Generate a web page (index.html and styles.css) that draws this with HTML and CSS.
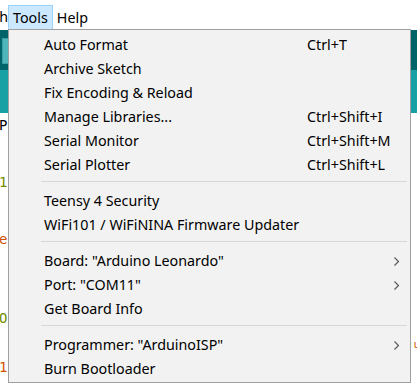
FILE: index.html
```html
<!DOCTYPE html>
<html lang="en">
<head>
  <meta charset="UTF-8">
  <title>Tools menu</title>
  <link rel="stylesheet" href="styles.css">
</head>
<body>
  <div class="window">
    <div class="menubar">
      <span class="menubar-item cut"><span>Sketch</span></span>
      <span class="menubar-item open">Tools</span>
      <span class="menubar-item">Help</span>
    </div>
    <div class="toolbar">
      <div class="tool-btn"></div>
    </div>
    <div class="tabs"></div>
    <div class="editor">
      <div class="code-line plain">P</div>
      <div class="code-line">&nbsp;</div>
      <div class="code-line">&nbsp;</div>
      <div class="code-line olive">1]</div>
      <div class="code-line">&nbsp;</div>
      <div class="code-line">&nbsp;</div>
      <div class="code-line orange">e</div>
      <div class="code-line">&nbsp;</div>
      <div class="code-line">&nbsp;</div>
      <div class="code-line">&nbsp;</div>
      <div class="code-line tall olive">O</div>
      <div class="code-line short"><span class="edge-blue">:</span><span class="edge-orange">u</span></div>
      <div class="code-line orange">1</div>
    </div>

    <div class="menu">
      <div class="item"><span>Auto Format</span><span>Ctrl+T</span></div>
      <div class="item"><span>Archive Sketch</span></div>
      <div class="item"><span>Fix Encoding &amp; Reload</span></div>
      <div class="item"><span>Manage Libraries...</span><span>Ctrl+Shift+I</span></div>
      <div class="item"><span>Serial Monitor</span><span>Ctrl+Shift+M</span></div>
      <div class="item"><span>Serial Plotter</span><span>Ctrl+Shift+L</span></div>
      <div class="sep"></div>
      <div class="item"><span>Teensy 4 Security</span></div>
      <div class="item"><span>WiFi101 / WiFiNINA Firmware Updater</span></div>
      <div class="sep"></div>
      <div class="item sub"><span>Board: "Arduino Leonardo"</span><span></span>
        <svg class="chev" width="6" height="9" viewBox="0 0 6 9"><polyline points="0.5,0.5 4.5,4.5 0.5,8.5" fill="none" stroke="#555" stroke-width="1.1"/></svg>
      </div>
      <div class="item sub"><span>Port: "COM11"</span><span></span>
        <svg class="chev" width="6" height="9" viewBox="0 0 6 9"><polyline points="0.5,0.5 4.5,4.5 0.5,8.5" fill="none" stroke="#555" stroke-width="1.1"/></svg>
      </div>
      <div class="item"><span>Get Board Info</span></div>
      <div class="sep"></div>
      <div class="item sub"><span>Programmer: "ArduinoISP"</span><span></span>
        <svg class="chev" width="6" height="9" viewBox="0 0 6 9"><polyline points="0.5,0.5 4.5,4.5 0.5,8.5" fill="none" stroke="#555" stroke-width="1.1"/></svg>
      </div>
      <div class="item"><span>Burn Bootloader</span></div>
    </div>
  </div>
</body>
</html>
```

FILE: styles.css
```css
body {
  margin: 0;
  background: #fff;
  font-family: 'Noto Sans', sans-serif;
  font-size: 14.3px;
  color: #000;
}
.window {
  position: relative;
  width: 417px;
  height: 389px;
  overflow: hidden;
}
.menubar {
  display: flex;
  align-items: flex-start;
  height: 30px;
  background: #fff;
}
.menubar-item {
  margin-top: 5px;
  height: 25px;
  line-height: 24px;
  padding: 0 4px 0 3px;
  border: 1px solid transparent;
  box-sizing: border-box;
  white-space: nowrap;
}
.menubar-item.cut {
  display: flex;
  justify-content: flex-end;
  width: 8px;
  padding: 0;
  border: 0;
  overflow: hidden;
}
.menubar-item.open {
  padding: 0 4px 0 4px;
  background: #cce8ff;
  border-color: #99d1ff;
}
.toolbar {
  height: 40px;
  background: #006468;
  padding: 8px 0 0 2px;
  box-sizing: border-box;
}
.tool-btn {
  width: 27px;
  height: 26px;
  background: #4db7bb;
  border: 1px solid #3c9ea2;
  box-sizing: border-box;
}
.tabs {
  height: 43px;
  background: #17a1a5;
}
.editor {
  padding-top: 3px;
  font-family: 'DejaVu Sans Mono', monospace;
  font-size: 14px;
}
.code-line {
  height: 19px;
  line-height: 19px;
  white-space: pre;
  margin-left: -1px;
}
.code-line.tall {
  height: 25px;
  line-height: 25px;
}
.code-line.short {
  display: flex;
  justify-content: flex-end;
  height: 27px;
  line-height: 27px;
  font-size: 11px;
}
.plain { color: #000; }
.olive { color: #728e00; }
.orange { color: #d35400; }
.edge-blue { color: #00979c; }
.edge-orange { color: #d35400; margin-right: -3px; }

/* dropdown */
.menu {
  position: absolute;
  left: 8px;
  top: 29px;
  width: 403px;
  padding: 3px 0 1px;
  background: #f2f2f2;
  border: 1px solid #a0a0a0;
  box-sizing: border-box;
}
.item {
  display: grid;
  grid-template-columns: 263px 1fr 16px;
  align-items: center;
  height: 24px;
  line-height: 24px;
  padding-left: 35px;
  white-space: nowrap;
}
.chev {
  display: block;
}
.sep {
  height: 1px;
  background: #d7d7d7;
  margin: 4px 3px 7px 32px;
}
```
